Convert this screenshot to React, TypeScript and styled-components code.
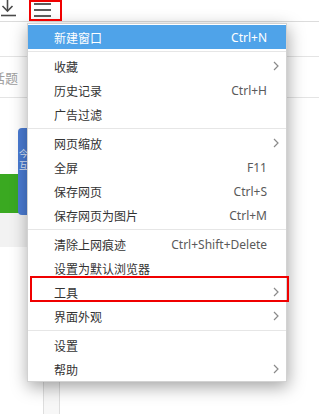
import React from "react";
import styled, { createGlobalStyle } from "styled-components";

const Global = createGlobalStyle`
  html, body { margin: 0; padding: 0; background: #fff; }
  body { font-family: "Noto Sans CJK SC", "Noto Sans", sans-serif; }
  * { box-sizing: border-box; }
`;

const Screen = styled.div`
  position: relative;
  width: 319px;
  height: 414px;
  overflow: hidden;
  background: #fff;
  display: flex;
  flex-direction: column;
`;

const Toolbar = styled.div`
  height: 22px;
  flex: none;
  display: flex;
  align-items: flex-start;
  background: #fff;
  border-bottom: 1px solid #dcdcdc;
`;

const ToolIcon = styled.div<{ $w: number; $ml: number }>`
  width: ${(p) => p.$w}px;
  margin-left: ${(p) => p.$ml}px;
  height: 21px;
  display: flex;
  align-items: flex-start;
  justify-content: center;
`;

const AddressRow = styled.div`
  height: 35px;
  flex: none;
  border-bottom: 1px solid #e4e4e4;
  background: #fff;
`;

const SearchRow = styled.div`
  height: 41px;
  flex: none;
  display: flex;
  align-items: center;
  border-bottom: 1px solid #e4e4e4;
  overflow: hidden;
`;

const Placeholder = styled.span`
  margin-left: -8px;
  font-size: 13px;
  color: #a0a0a0;
  white-space: nowrap;
`;

const Body = styled.div`
  flex: 1;
  display: flex;
`;

const SideCol = styled.div`
  width: 43px;
  flex: none;
  display: flex;
  flex-direction: column;
  background: #fff;
`;

const Spacer = styled.div<{ $h: number; $bg?: string }>`
  height: ${(p) => p.$h}px;
  background: ${(p) => p.$bg || "transparent"};
  flex: none;
`;

const GreenBar = styled.div`
  height: 39px;
  flex: none;
  background: #3aa921;
`;

const StripCol = styled.div`
  width: 17px;
  flex: none;
  border-left: 1px solid #dedede;
  border-right: 1px solid #dedede;
  background: #f7f7f7;
`;

const MainCol = styled.div`
  flex: 1;
  background: #fff;
`;

const SideTab = styled.div`
  position: absolute;
  left: 18px;
  top: 128px;
  width: 11px;
  height: 87px;
  border-radius: 4px 0 0 4px;
  background: #4a7bd3;
  color: #dfe8f8;
  font-size: 9px;
  line-height: 12px;
  padding: 20px 0 0 1px;
  display: flex;
  flex-direction: column;
  align-items: flex-start;
`;

const Menu = styled.div`
  position: absolute;
  left: 27px;
  top: 23px;
  width: 260px;
  background: #fff;
  border: 1px solid #d2d2d2;
  padding: 1px 0 0;
  box-shadow: 1px 5px 16px rgba(0, 0, 0, 0.36);
  display: flex;
  flex-direction: column;
`;

const Row = styled.div<{ $active?: boolean }>`
  height: 24px;
  display: flex;
  align-items: center;
  padding: 0 7px 0 26px;
  background: ${(p) => (p.$active ? "#4fa3e9" : "transparent")};
  color: ${(p) => (p.$active ? "#fff" : "#333")};
`;

const Label = styled.span`
  flex: 1;
  font-size: 12px;
  font-family: "Noto Sans CJK SC", sans-serif;
  white-space: nowrap;
`;

const Shortcut = styled.span<{ $active?: boolean }>`
  font-family: "Noto Sans", sans-serif;
  font-size: 12px;
  color: ${(p) => (p.$active ? "#fff" : "#5a5a5a")};
  white-space: nowrap;
`;

const Arrow = styled.span`
  width: 12px;
  flex: none;
  display: flex;
  justify-content: flex-end;
  align-items: center;
`;

const Separator = styled.div`
  height: 1px;
  margin: 2px 0;
  background: #e6e6e6;
`;

const Mark = styled.div<{ $l: number; $t: number; $w: number; $h: number }>`
  position: absolute;
  left: ${(p) => p.$l}px;
  top: ${(p) => p.$t}px;
  width: ${(p) => p.$w}px;
  height: ${(p) => p.$h}px;
  border: 2px solid #f00000;
  pointer-events: none;
`;

type Item = { label: string; shortcut?: string; sub?: boolean; active?: boolean };

const groups: Item[][] = [
  [{ label: "新建窗口", shortcut: "Ctrl+N", active: true }],
  [
    { label: "收藏", sub: true },
    { label: "历史记录", shortcut: "Ctrl+H" },
    { label: "广告过滤" },
  ],
  [
    { label: "网页缩放", sub: true },
    { label: "全屏", shortcut: "F11" },
    { label: "保存网页", shortcut: "Ctrl+S" },
    { label: "保存网页为图片", shortcut: "Ctrl+M" },
  ],
  [
    { label: "清除上网痕迹", shortcut: "Ctrl+Shift+Delete" },
    { label: "设置为默认浏览器" },
    { label: "工具", sub: true },
    { label: "界面外观", sub: true },
  ],
  [{ label: "设置" }, { label: "帮助", sub: true }],
];

const Chevron = () => (
  <svg width="6" height="10" viewBox="0 0 6 10">
    <polyline points="1,1 5,5 1,9" fill="none" stroke="#8a8a8a" strokeWidth="1.2" />
  </svg>
);

const DownloadIcon = () => (
  <svg width="17" height="17" viewBox="0 0 17 17">
    <g fill="none" stroke="#4a4a4a" strokeWidth="1.6">
      <line x1="7.5" y1="0" x2="7.5" y2="11" />
      <polyline points="2.5,6 7.5,11 12.5,6" />
      <line x1="1" y1="15.5" x2="16" y2="15.5" />
    </g>
  </svg>
);

const Hamburger = () => (
  <svg width="17" height="17" viewBox="0 0 17 17">
    <g stroke="#4a4a4a" strokeWidth="1.8">
      <line x1="0" y1="4" x2="17" y2="4" />
      <line x1="0" y1="10" x2="17" y2="10" />
      <line x1="0" y1="16" x2="17" y2="16" />
    </g>
  </svg>
);

export default function App() {
  return (
    <Screen>
      <Global />
      <Toolbar>
        <ToolIcon $w={17} $ml={0}>
          <DownloadIcon />
        </ToolIcon>
        <ToolIcon $w={17} $ml={17}>
          <Hamburger />
        </ToolIcon>
      </Toolbar>
      <AddressRow />
      <SearchRow>
        <Placeholder>话题</Placeholder>
      </SearchRow>
      <Body>
        <SideCol>
          <Spacer $h={76} />
          <GreenBar />
          <Spacer $h={34} $bg="#f2f2f2" />
        </SideCol>
        <StripCol />
        <MainCol />
      </Body>
      <SideTab>
        <span>今</span>
        <span>互</span>
      </SideTab>
      <Menu>
        {groups.map((g, gi) => (
          <React.Fragment key={gi}>
            {gi > 0 && <Separator />}
            {g.map((it) => (
              <Row key={it.label} $active={it.active}>
                <Label>{it.label}</Label>
                {it.shortcut && <Shortcut $active={it.active}>{it.shortcut}</Shortcut>}
                <Arrow>{it.sub && <Chevron />}</Arrow>
              </Row>
            ))}
          </React.Fragment>
        ))}
      </Menu>
      <Mark $l={29} $t={0} $w={33} $h={21} />
      <Mark $l={30} $t={276} $w={259} $h={26} />
    </Screen>
  );
}
